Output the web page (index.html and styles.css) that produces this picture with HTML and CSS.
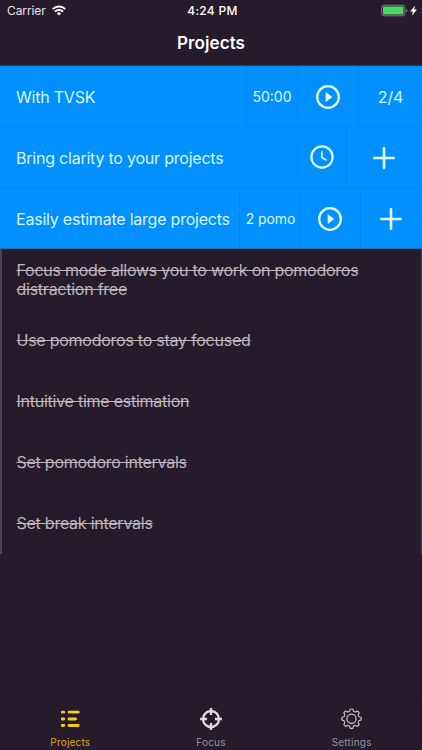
FILE: index.html
```html
<!DOCTYPE html>
<html lang="en">
<head>
<meta charset="utf-8">
<title>Projects</title>
<link rel="stylesheet" href="styles.css">
</head>
<body>
<div class="app">
  <header class="status">
    <div class="carrier"><span>Carrier</span>
      <svg class="wifi" width="14" height="11" viewBox="0 0 14 11" fill="none" stroke="#fff" stroke-width="1.9"><path d="M.7 4.1a9 9 0 0 1 12.6 0M2.9 6.6a5.9 5.9 0 0 1 8.2 0"/><path d="M7 10.5 4.9 8.4a3 3 0 0 1 4.2 0z" fill="#fff" stroke="none"/></svg>
    </div>
    <span class="clock">4:24 PM</span>
    <svg class="battery" width="37" height="14" viewBox="0 0 37 14"><rect x=".7" y="1.2" width="23.1" height="10.6" rx="2.4" fill="none" stroke="#858087"/><rect x="2" y="2.5" width="20.5" height="8" rx="1" fill="#4cd964"/><path d="M25 4.7q1.3.4 1.3 1.8T25 8.3z" fill="#858087"/><path d="M34.2 1.5 29.2 7.4h2.8L30.9 11.8l5-6.2h-2.8z" fill="#fff"/></svg>
  </header>
  <h1 class="title">Projects</h1>
  <main class="list">
    <div class="row row-timer">
      <div class="name"><span>With TVSK</span></div>
      <div class="cell time"><span>50:00</span></div>
      <div class="cell"><svg width="24" height="24" viewBox="0 0 24 24"><circle cx="12" cy="12" r="10.8" fill="none" stroke="#e9ffff" stroke-width="2.2"/><path d="m9.7 7 6.6 5-6.6 5z" fill="#e9ffff"/></svg></div>
      <div class="cell count"><span>2/4</span></div>
    </div>
    <div class="row row-new">
      <div class="name"><span>Bring clarity to your projects</span></div>
      <div class="cell estimate"><svg width="24" height="24" viewBox="0 0 24 24" fill="none" stroke="#e9ffff"><circle cx="12" cy="12" r="10.6" stroke-width="2.2"/><path d="M11.8 6.2v6.2l4.7 3" stroke-width="1.6"/></svg></div>
      <div class="cell add"><svg width="22" height="22" viewBox="0 0 22 22" stroke="#e9ffff" stroke-width="2.6" stroke-linecap="round"><path d="M1.3 11h19.4M11 1.3v19.4"/></svg></div>
    </div>
    <div class="row row-estimate">
      <div class="name"><span>Easily estimate large projects</span></div>
      <div class="cell pomo"><span>2 pomo</span></div>
      <div class="cell play-late"><svg width="24" height="24" viewBox="0 0 24 24"><circle cx="12" cy="12" r="10.8" fill="none" stroke="#e9ffff" stroke-width="2.2"/><path d="m9.7 7 6.6 5-6.6 5z" fill="#e9ffff"/></svg></div>
      <div class="cell add"><svg width="22" height="22" viewBox="0 0 22 22" stroke="#e9ffff" stroke-width="2.6" stroke-linecap="round"><path d="M1.3 11h19.4M11 1.3v19.4"/></svg></div>
    </div>
    <div class="done"><s>Focus mode allows you to work on pomodoros<br>distraction free</s></div>
    <div class="done"><s>Use pomodoros to stay focused</s></div>
    <div class="done"><s>Intuitive time estimation</s></div>
    <div class="done"><s>Set pomodoro intervals</s></div>
    <div class="done"><s>Set break intervals</s></div>
  </main>
  <nav class="tabs">
    <a class="tab active"><svg width="24" height="24" viewBox="0 0 24 24" stroke="#f8ca1c" stroke-width="2.8" stroke-linecap="round"><path d="M4.2 5.2h1.6M11 5.2h9.3M4.2 12h1.6M11 12h6.6M4.2 18.5h1.6M11 18.5h9.3"/></svg><span>Projects</span></a>
    <a class="tab"><svg width="24" height="24" viewBox="0 0 24 24" fill="none" stroke="#dedade" stroke-width="2.3"><circle cx="12" cy="12" r="8"/><path d="M12 1v7M12 16v7M1 12h7M16 12h7"/></svg><span>Focus</span></a>
    <a class="tab"><svg width="24" height="24" viewBox="-11.5 -11.7 24 24" fill="none" stroke="#c9c5cb" stroke-width="1.2"><defs><path id="tooth" d="M-2.9-7Q-1.9-7.2-1.7-8.4-1.5-9.7-.9-9.7H.9Q1.5-9.7 1.7-8.4 1.9-7.2 2.9-7"/></defs><circle r="4.6"/><use href="#tooth"/><use href="#tooth" transform="rotate(45)"/><use href="#tooth" transform="rotate(90)"/><use href="#tooth" transform="rotate(135)"/><use href="#tooth" transform="rotate(180)"/><use href="#tooth" transform="rotate(225)"/><use href="#tooth" transform="rotate(270)"/><use href="#tooth" transform="rotate(315)"/></svg><span>Settings</span></a>
  </nav>
</div>
</body>
</html>
```
FILE: styles.css
```css
* { box-sizing: border-box; }
body { margin: 0; background: #261b2a; }
svg { display: block; flex: none; }
span, s { white-space: nowrap; }
.app { width: 422px; height: 750px; display: flex; flex-direction: column; background: #261b2a; color: #fff; font-family: Inter, "Liberation Sans", sans-serif; overflow: hidden; }
.status { height: 22px; flex: none; display: grid; grid-template-columns: 1fr auto 1fr; align-items: center; padding: 0 4px 0 7px; }
.carrier { display: flex; align-items: center; gap: 6px; font-size: 12px; line-height: 22px; color: #e8e5e9; letter-spacing: -0.1px; }
.wifi { margin-bottom: 1px; }
.clock { font-size: 12px; line-height: 22px; font-weight: 500; letter-spacing: 0.3px; }
.battery { justify-self: end; }
.title { margin: 0; height: 43px; flex: none; text-align: center; font-size: 17px; line-height: 42px; font-weight: 600; letter-spacing: 0.1px; }
.list { flex: 1; border-top: 1px solid #173e76; }
.row { display: grid; height: 61px; background: #0090ff; color: #dcf6ff; border-bottom: 1px solid #0084f7; }
.row-timer { grid-template-columns: 246px 51px 61px 64px; }
.row-new { grid-template-columns: 297px 49px 76px; }
.row-estimate { grid-template-columns: 239px 61px 60px 62px; border-bottom-color: #186fbf; }
.name { display: flex; align-items: center; padding: 2px 0 0 16px; font-size: 16px; letter-spacing: -0.22px; }
.cell { display: flex; align-items: center; justify-content: center; border-left: 1px solid #0084f7; padding-top: 2px; }
.time, .pomo { font-size: 14px; padding-top: 0; }
.pomo { letter-spacing: -0.1px; padding-left: 1px; }
.count { font-size: 16px; letter-spacing: -0.1px; }
.estimate { padding: 0 1px 1px 0; }
.add, .play-late { padding-right: 1px; }
.add { padding-right: 2px; }
.done { height: 61px; display: flex; align-items: center; padding-left: 14.5px; border-left: 2px solid #4a454e; border-right: 1px solid #4a454e; font-size: 16px; line-height: 19px; letter-spacing: -0.25px; color: #bab6bc; }
.done s { text-decoration-thickness: 1px; }
.tabs { height: 51px; flex: none; display: grid; grid-template-columns: repeat(3, 1fr); border-top: 1px solid #1f1723; }
.tab { display: flex; flex-direction: column; align-items: center; padding-top: 7px; font-size: 10px; line-height: 12px; letter-spacing: 0.2px; gap: 5px; color: #98929c; }
.active { color: #d8aa1d; }
```
